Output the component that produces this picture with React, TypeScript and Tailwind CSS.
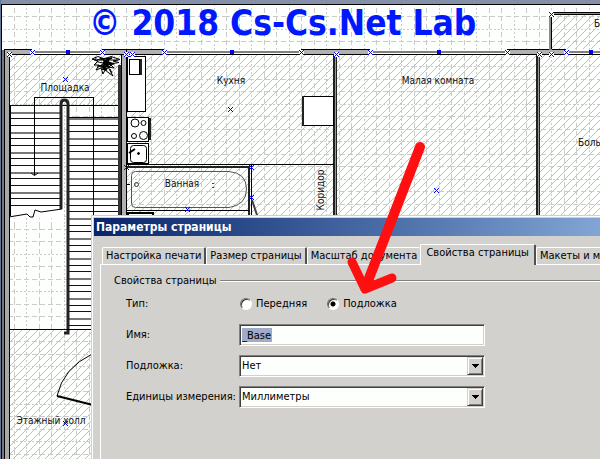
import { useState, type ReactNode } from 'react'

const tabs = ['Настройка печати', 'Размер страницы', 'Масштаб документа', 'Свойства страницы', 'Макеты и ма']

// selection handles of the plan: x, y
const crosses = [
  [9, 54], [32, 52], [102, 52], [126, 54], [132, 54], [164, 52], [301, 52], [336, 54], [370, 52], [507, 52],
  [539, 54], [551, 54], [566, 52], [551, 14], [65, 79], [230, 109], [436, 190], [187, 209], [65, 423],
  [126, 167], [251, 167], [251, 197],
]
const dots = [[68, 52], [232, 52], [439, 52], [591, 52]]
const walls = [[5, 32], [102, 164], [301, 370], [507, 566]]

const steps = (from: number, to: number) => {
  const list: number[] = []
  for (let y = from; y < to; y += 20) list.push(y, y + 7, y + 13)
  return list.filter(y => y < to)
}

function FloorPlan() {
  return (
    <svg className="absolute inset-0 h-full w-full" shapeRendering="crispEdges" fill="none" stroke="#000">
      <defs>
        <pattern id="grid" width="75" height="75" patternUnits="userSpaceOnUse">
          <g stroke="#cbcbcb" strokeDasharray="5 3">
            <path d="M1.5 0V75M14.5 0V75M39.5 0V75M51.5 0V75M0 4.5H75M0 16.5H75M0 41.5H75M0 54.5H75" />
            <path d="M26.5 0V75M64.5 0V75M0 29.5H75M0 66.5H75" strokeDasharray="2 2" />
          </g>
        </pattern>
        <pattern id="hatch" width="8" height="8" patternUnits="userSpaceOnUse">
          <path d="M-2 10L10 -2M-2 2L2 -2M6 10L10 6" stroke="#9cd6a6" shapeRendering="geometricPrecision" />
        </pattern>
      </defs>

      <rect width="100%" height="100%" fill="#fdfffd" stroke="none" />
      <g stroke="none" fill="url(#hatch)">
        <rect x="10" y="55" width="111" height="50" />
        <rect x="10" y="330" width="100" height="100%" />
        <rect x="127" y="55" width="100%" height="200" />
        <rect x="552" y="15" width="100%" height="34" />
      </g>
      <rect width="100%" height="100%" fill="url(#grid)" stroke="none" />

      {/* page edge */}
      <rect width="100%" height="4" fill="#8490a8" stroke="none" />
      <rect width="1" height="100%" fill="#64789c" stroke="none" />
      <path d="M1.5 4V2000M1 4.5H4000" />

      {/* outer walls and windows */}
      <rect x="2" y="50" width="3" height="100%" fill="#777" stroke="none" />
      <rect x="5" y="50" width="4" height="100%" fill="#a9a9a9" stroke="none" />
      <path d="M9.5 54V2000M4.5 49V2000" />
      <rect x="10" y="50" width="100%" height="4" fill="#fff" stroke="none" />
      <path d="M10 52H4000" stroke="#808080" strokeWidth="2" />
      <path d="M9 54.5H4000" />
      {walls.map(([from, to]) => (
        <g key={from}>
          <rect x={from} y="50" width={to - from} height="4" fill="#b2b0b2" stroke="none" />
          <path d={`M${from} 49.5H${to}`} />
        </g>
      ))}
      <rect x="549" y="12" width="100%" height="3" fill="#8c8c8c" stroke="none" />
      <rect x="549" y="12" width="3" height="38" fill="#8c8c8c" stroke="none" />
      <path d="M551.5 49V14.5H4000M549 12.5H4000" />

      {/* inner walls */}
      <rect x="122" y="55" width="4" height="100%" fill="#b2b0b2" stroke="none" />
      <path d="M121.5 55V2000M126.5 50V2000" />
      <path d="M335 55V2000M538 55V2000" strokeWidth="4" stroke="#222" />
      <path d="M335.5 55V2000M538.5 55V2000" stroke="#999" />
      <path d="M127 164.5H334M251.5 165V220" />
      <path d="M127 167H250M249 166V220" strokeWidth="2" stroke="#222" />
      <path d="M127 210.5H249" />

      {/* stairs */}
      <rect x="10" y="105" width="51" height="110" fill="#fff" stroke="none" />
      <rect x="68" y="117" width="53" height="213" fill="#fff" stroke="none" />
      <path d="M10 105.5H121M67 117.5H120" />
      {steps(105, 212).map((y, i) => (
        <path key={y} d={`M10 ${y + 0.5}H60`} stroke={i % 3 === 1 ? '#777' : '#111'} strokeWidth={i % 3 === 1 ? 2 : 1} />
      ))}
      {steps(118, 330).map((y, i) => (
        <path key={y} d={`M68 ${y + 0.5}H120`} stroke={i % 3 === 0 ? '#777' : '#111'} strokeWidth={i % 3 === 0 ? 2 : 1} />
      ))}
      <path d="M10 217L27 213L30 217H33L35 210L42 211L62 209V218H10Z" fill="#fff" stroke="none" />
      <g shapeRendering="auto">
        <path d="M9 217L27 214L30 217H33L35 210L41 212L62 209" />
        <path d="M61 209V104Q61 100 64.500 100Q68 100 68 104V333H64" strokeWidth="3" stroke="#222" />
        <path d="M31 173L34.500 175.500L38 173" />
      </g>
      <path d="M34.500 175V97.500H93.500V217" />
      <path d="M119.500 65V218" strokeWidth="3" stroke="#333" />
      <path d="M10.500 105V216" />
      <path d="M10 329.500H92" />

      {/* plant */}
      <g shapeRendering="auto" strokeWidth="1">
        <path d="M92 59L98 56.500L104 59L111 56.500L120 59.500L113 61L119 62.500L110 64L114 68L108 67L113 76L105 70L103 74L101 68L96 70L99 65L94 65L98 61Z" />
        <path d="M100 59L112 58L105 61L114 64L103 63L110 67L101 66L107 70L102 69M104 58V70M107 59V69" strokeWidth="1.500" />
        <path d="M97 60Q104 56 108 65Q103 71 99 65M102 58Q108 62 105 70M110 58Q106 62 111 66M96 58Q94 62 103 63M94 60L118 60M97 66L113 64M110 69L112 73M97 68L106 62" />
      </g>

      {/* kitchen */}
      <g fill="#fff">
        <rect x="127.500" y="56.500" width="18" height="55" />
        <rect x="129.500" y="59.500" width="10" height="15" />
        <rect x="127.500" y="117.500" width="21" height="24" />
        <rect x="127.500" y="143.500" width="21" height="20" />
        <rect x="302.500" y="96.500" width="31" height="29" />
      </g>
      <path d="M141 59V75M149.500 118V140M303 96V126" strokeWidth="2" stroke="#222" />
      <g shapeRendering="auto">
        <circle cx="135" cy="123" r="4" />
        <circle cx="143.500" cy="123" r="2.500" />
        <circle cx="134" cy="136" r="2.500" />
        <circle cx="143.500" cy="135.500" r="4" />
        <rect x="130.500" y="145.500" width="16" height="17" rx="3" />
        <circle cx="138.500" cy="153.500" r="1" fill="#000" />
        <path d="M129 153L135 149" strokeWidth="2" />

        {/* bathroom */}
        <path d="M135.500 171.500H229Q246.500 173 246.500 189T229 207.500H135.500Q131.500 207.500 131.500 203.500V175.500Q131.500 171.500 135.500 171.500Z" stroke="#555" />
        <circle cx="136.500" cy="184.500" r="2" stroke="#333" />
        <path d="M127 184.500H130" />
        <path d="M252 200L258 218" strokeWidth="2" stroke="#444" />
        <path d="M57 396L93 405" strokeWidth="2" />
        <path d="M57 396Q63 368 93 353.500" />
      </g>
      <rect x="128" y="213" width="25" height="10" strokeWidth="2" fill="#fff" />
      <path d="M212 183.500H214M212 187.500H214" stroke="#444" />

      <g stroke="#0000f0">
        {crosses.map(([x, y]) => (
          <g key={`${x}-${y}`}>
            {y < 55 && <rect x={x - 2.5} y={y - 2.5} width="5" height="5" fill="#fff" stroke="none" />}
            <path d={`M${x - 2} ${y - 2}l5 5m0 -5l-5 5`} shapeRendering="auto" />
          </g>
        ))}
        {dots.map(([x, y]) => (
          <circle key={x} cx={x} cy={y} r="2" fill="#0000f0" />
        ))}
      </g>

      <g stroke="none" fill="#111" className="text-[10px]" textAnchor="middle">
        <text x="65" y="91">Площадка</text>
        <text x="231" y="84">Кухня</text>
        <text x="438" y="84">Малая комната</text>
        <text x="182" y="187">Ванная</text>
        <text x="51" y="424">Этажный холл</text>
        <text x="578" y="146" textAnchor="start">Боль</text>
        <text x="594" y="27" textAnchor="start">Б</text>
        <text transform="translate(324 190) rotate(-90)">Коридор</text>
      </g>
    </svg>
  )
}

function Field({ id, label, children }: { id: string; label: string; children: ReactNode }) {
  return (
    <div className="flex items-center">
      <label htmlFor={id} className="w-[113px] shrink-0 whitespace-nowrap">{label}</label>
      <div className="relative w-[246px] shrink-0">{children}</div>
    </div>
  )
}

const sunken = 'block h-[22px] w-full appearance-none rounded-none border border-t-[#808080] border-l-[#808080] border-r-white border-b-white bg-[#fdfffd] px-0.5 text-black outline-none shadow-[inset_1px_1px_#404040,inset_-1px_-1px_#d4d0c8]'

function Dropdown({ id, options }: { id: string; options: string[] }) {
  return (
    <>
      <select id={id} className={sunken}>
        {options.map(option => <option key={option}>{option}</option>)}
      </select>
      <span className="pointer-events-none absolute inset-y-0.5 right-0.5 flex w-4 items-center justify-center border border-t-[#d4d0c8] border-l-[#d4d0c8] border-r-[#404040] border-b-[#404040] bg-[#d2d1cd] shadow-[inset_1px_1px_#fff,inset_-1px_-1px_#808080]">
        <svg width="7" height="4" shapeRendering="crispEdges"><path d="M0 0h7v1h-1v1h-1v1h-1v1h-1v-1h-1v-1h-1v-1h-1z" /></svg>
      </span>
    </>
  )
}

function Radio({ label, checked, onChange }: { label: string; checked: boolean; onChange: () => void }) {
  return (
    <label className="flex items-center gap-1">
      <input
        type="radio"
        name="type"
        checked={checked}
        onChange={onChange}
        className="h-3 w-3 appearance-none rounded-full border border-t-[#707070] border-l-[#707070] border-r-white border-b-white bg-white shadow-[inset_1px_1px_#404040] checked:bg-[radial-gradient(circle,#000_2px,#fff_3px)]"
      />
      {label}
    </label>
  )
}

function PageSetup() {
  const [tab, setTab] = useState(3)
  const [type, setType] = useState('back')
  const [name, setName] = useState('_Base')

  return (
    <section className="absolute top-[215px] right-0 bottom-0 left-[91px] flex flex-col overflow-hidden border-t border-l border-[#d4d0c8] bg-[#d2d1cd] pt-0.5 pl-0.5 shadow-[inset_1px_1px_#fff]">
      <h2 className="h-[18px] shrink-0 bg-linear-to-r from-[#0a246a] to-[#82a5d5] pl-0.5 text-[12px] leading-[18px] font-bold text-white">
        Параметры страницы
      </h2>

      <div role="tablist" className="mt-2 flex h-5 shrink-0 items-end pl-2">
        {tabs.map((title, i) => (
          <button
            key={title}
            role="tab"
            aria-selected={tab === i}
            onClick={() => setTab(i)}
            className={`shrink-0 rounded-t-[2px] border-t border-l border-t-white border-l-white border-r-[#505050] whitespace-nowrap ${
              tab === i ? 'relative -mb-px h-[21px] bg-[#d2d1cd] px-[5px] pb-1' : 'h-[17px] px-[3px]'
            } ${i === tab - 1 ? 'border-r-0' : 'border-r-2'}`}
          >
            {title}
          </button>
        ))}
      </div>

      <div className="ml-1.5 grow border-t border-l border-white pt-2 pl-[13px]">
        <div className="flex h-4 items-center gap-1">
          <h3>Свойства страницы</h3>
          <hr className="h-0.5 grow border-t border-b border-t-[#808080] border-b-white" />
        </div>

        <div className="flex flex-col gap-[9px] pt-1 pl-3">
          <div className="flex h-[22px] items-center" role="radiogroup" aria-label="Тип">
            <span className="w-[114px] shrink-0">Тип:</span>
            <div className="flex gap-5">
              <Radio label="Передняя" checked={type === 'front'} onChange={() => setType('front')} />
              <Radio label="Подложка" checked={type === 'back'} onChange={() => setType('back')} />
            </div>
          </div>
          <Field id="name" label="Имя:">
            <input
              id="name"
              value={name}
              onChange={e => setName(e.target.value)}
              className={`${sunken} bg-[linear-gradient(#9fabc8,#9fabc8)] bg-[length:30px_14px] bg-[position:2px_3px] bg-no-repeat`}
            />
          </Field>
          <Field id="background" label="Подложка:">
            <Dropdown id="background" options={['Нет', '_Base']} />
          </Field>
          <Field id="units" label="Единицы измерения:">
            <Dropdown id="units" options={['Миллиметры', 'Сантиметры', 'Метры']} />
          </Field>
        </div>
      </div>
    </section>
  )
}

export default function App() {
  return (
    <main className="relative h-screen overflow-hidden text-[11px] leading-4 text-black [font-family:'DejaVu_Sans_Condensed','DejaVu_Sans',sans-serif]">
      <FloorPlan />
      <h1 className="absolute top-0 left-[89px] text-[35px] leading-[47px] font-bold whitespace-nowrap text-[#0018ff]">
        © 2018 Cs-Cs.Net Lab
      </h1>
      <PageSetup />

      {/* pointer to the selected option */}
      <svg className="pointer-events-none absolute inset-0 h-full w-full" fill="none" stroke="#ff0f0f" strokeLinecap="round" strokeLinejoin="round">
        <path d="M420 147L366 286" strokeWidth="10" />
        <path d="M352 262L365 289L392 278" strokeWidth="9" />
      </svg>
    </main>
  )
}
